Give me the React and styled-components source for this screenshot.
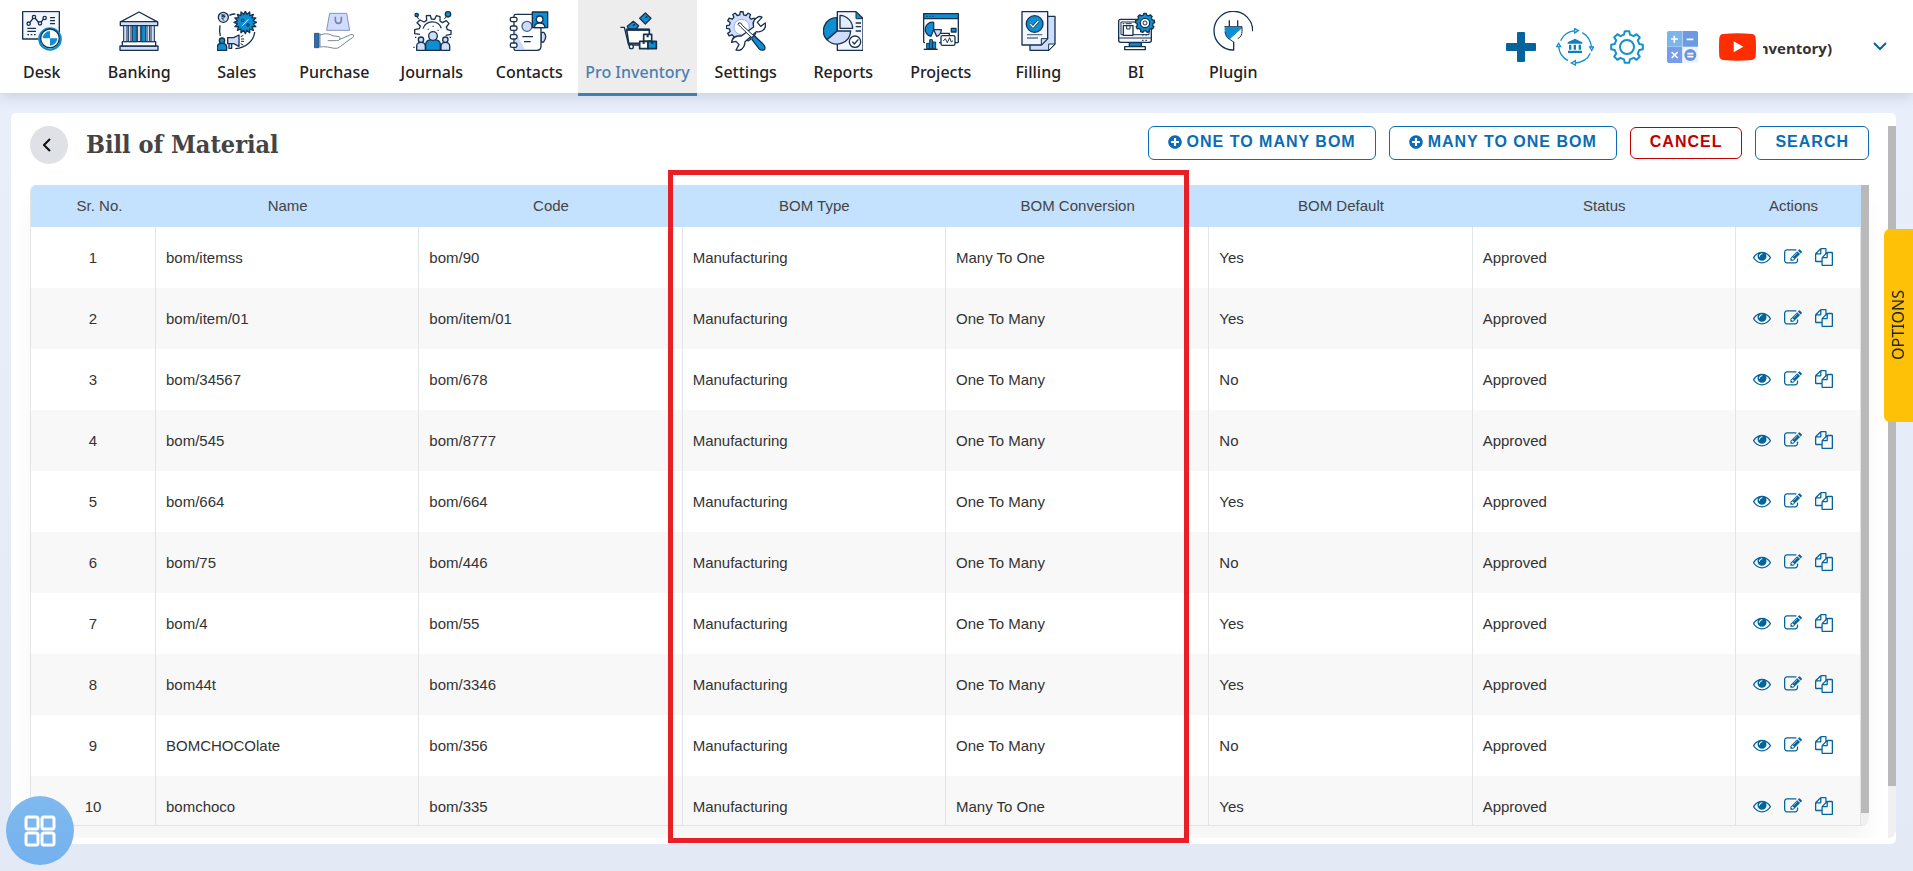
import React from "react";
import styled, { createGlobalStyle, css } from "styled-components";
import { FaPlusCircle } from "react-icons/fa";

const INK = "#17324f";
const BLUE = "#0f8fd3";
const PALE = "#cfdcfb";

const GlobalStyle = createGlobalStyle`
  * {
    box-sizing: border-box;
  }

  body {
    margin: 0;
    background: #e8eef9;
    color: #333;
    font-family: "Liberation Sans", Arial, sans-serif;
    font-size: 15px;
  }

  button {
    font-family: inherit;
    cursor: pointer;
  }
`;

const Page = styled.div`
  display: flex;
  flex-direction: column;
  height: 100vh;
  min-width: 1360px;
  overflow: hidden;
  background: linear-gradient(#e9effb, #e3e9f5);
`;

/* Top bar */
const TopBar = styled.header`
  display: flex;
  justify-content: space-between;
  flex: none;
  height: 93px;
  background: #fff;
  box-shadow: 0 2px 14px rgba(60, 75, 100, 0.22);
`;

const Nav = styled.nav`
  display: grid;
  grid-template-columns: repeat(6, 1fr) 119px repeat(6, 1fr);
  flex: 0 0 1289px;
  margin-left: -7px;
`;

const NavLink = styled.a`
  display: flex;
  flex-direction: column;
  align-items: center;
  gap: 9px;
  height: 93px;
  padding-top: 11px;
  color: #222;
  font-family: "Noto Sans", sans-serif;
  font-size: 16px;
  font-weight: 500;
  line-height: 24px;
  text-decoration: none;
  white-space: nowrap;

  ${({ $active }) =>
    $active &&
    css`
      height: 96px;
      background: #ededed;
      border-bottom: 3px solid #427fab;
      color: #4a80b0;
    `}
`;

const NavIcon = styled.svg`
  width: 40px;
  height: 40px;
  fill: none;
  stroke: ${INK};
  stroke-width: 4;
  stroke-linejoin: round;
`;

const Tools = styled.div`
  display: flex;
  align-items: center;
  padding-right: 26px;
`;

const ToolButton = styled.button`
  display: flex;
  margin-right: ${({ $gap }) => $gap}px;
  padding: 0;
  border: 0;
  background: none;
`;

const Company = styled.div`
  display: flex;
  justify-content: flex-end;
  width: 69px;
  margin-right: 41px;
  padding-top: 2px;
  overflow: hidden;
  font-family: "Open Sans", sans-serif;
  font-size: 15px;
  font-weight: 700;
  line-height: 22px;
  white-space: nowrap;
`;

/* Main card */
const Card = styled.main`
  position: relative;
  display: flex;
  flex: 1;
  min-height: 0;
  margin: 20px 17px 27px 11px;
  padding: 13px 0 6px;
  border-radius: 5px;
  background: #fff;
`;

const Scroller = styled.div`
  display: flex;
  flex-direction: column;
  flex: 1;
  min-width: 0;
  padding: 0 19px 12px;
  overflow: hidden;
`;

const Rail = styled.div`
  flex: none;
  width: 8px;
  padding-bottom: ${({ $rest }) => $rest}px;
  border-radius: 0 0 8px 0;
  background: #f0f0f0;
`;

const Thumb = styled.div`
  height: 100%;
  background: #b9b9b9;
`;

const TitleRow = styled.div`
  display: flex;
  align-items: flex-start;
  flex: none;
  height: 59px;
`;

const BackButton = styled.button`
  display: flex;
  align-items: center;
  justify-content: center;
  width: 38px;
  height: 38px;
  margin-right: 18px;
  padding: 0 4px 0 0;
  border: 0;
  border-radius: 50%;
  background: #dee2e6;
`;

const Title = styled.h1`
  margin: 0 auto 0 0;
  color: #444;
  font-family: "DejaVu Serif Condensed", "DejaVu Serif", serif;
  font-size: 25px;
  font-weight: 700;
  line-height: 38px;
`;

const ActionBar = styled.div`
  display: flex;
  align-items: center;
  gap: 13px;
`;

const OutlineButton = styled.button`
  display: flex;
  align-items: center;
  gap: 5px;
  height: ${({ $danger }) => ($danger ? 32 : 34)}px;
  padding: 0 19px 2px;
  border: 1px solid currentColor;
  border-radius: 6px;
  background: #fff;
  color: ${({ $danger }) => ($danger ? "#c00000" : "#0b6cb3")};
  font-size: 16px;
  font-weight: 700;
  letter-spacing: 1px;
  white-space: nowrap;

  svg {
    font-size: 14px;
  }
`;

const TablePanel = styled.div`
  display: flex;
  flex: 1;
  min-height: 0;
  border-bottom: 1px solid #e2e4e6;
  border-radius: 6px 0 8px 0;
  box-shadow: 0 16px 20px rgba(0, 0, 0, 0.04);
`;

const TableView = styled.div`
  flex: 1;
  min-width: 0;
  overflow: hidden;
  border-left: 1px solid #e2e5e8;
  border-radius: 6px 0 0 0;
  background: #fff;
`;

const Table = styled.table`
  width: 100%;
  border-collapse: separate;
  border-spacing: 0;
  table-layout: fixed;
`;

const HeadCell = styled.th`
  width: ${({ $width }) => $width || "auto"};
  height: 42px;
  padding: ${({ $pad }) => $pad || "0 0 2px"};
  background: #c4e1fe;
  color: #444;
  font-weight: 400;
  text-align: center;
`;

const Row = styled.tr`
  background: #fff;

  &:nth-child(even) {
    background: #f8f8f8;
  }
`;

const Cell = styled.td`
  height: 61px;
  padding: 0 10px;
  border-right: 1px solid #e2e5e8;
  text-align: ${({ $center }) => ($center ? "center" : "left")};
`;

const RowActions = styled.div`
  display: flex;
  align-items: center;
  gap: 13px;
  padding: 0 0 2px 7px;
`;

const IconButton = styled.button`
  display: flex;
  padding: 0;
  border: 0;
  background: none;
  color: #04649c;

  svg {
    width: 18px;
    height: 18px;
    fill: currentColor;
  }
`;

/* Frame over the BOM Type and BOM Conversion columns */
const ColumnHighlight = styled.div`
  position: absolute;
  top: 57px;
  bottom: 1px;
  left: calc((100% - 304px) / 3 + 130px);
  width: calc((100% - 304px) / 3 - 6px);
  border: 5px solid #e81f27;
  pointer-events: none;
`;

const OptionsTab = styled.button`
  position: fixed;
  top: 229px;
  right: 0;
  width: 29px;
  height: 193px;
  padding: 0;
  border: 0;
  border-radius: 0 6px 6px 0;
  background: #ffc107;
  color: #222;
  font-family: "Noto Sans", sans-serif;
  font-size: 16px;
  writing-mode: vertical-rl;
  transform: rotate(180deg);
`;

const AppsButton = styled.button`
  position: fixed;
  bottom: 6px;
  left: 6px;
  display: flex;
  align-items: center;
  justify-content: center;
  width: 68px;
  height: 69px;
  padding: 0;
  border: 0;
  border-radius: 50%;
  background: linear-gradient(#7fb9ee, #74b1ef);
`;

// Closed outline of a cog wheel
const gearPath = (cx, cy, outer, inner, teeth) => {
  const step = (Math.PI * 2) / teeth;
  const points = [];
  for (let i = 0; i < teeth; i += 1) {
    const a = i * step - Math.PI / 2;
    [
      [-0.3, inner],
      [-0.18, outer],
      [0.18, outer],
      [0.3, inner],
    ].forEach(([offset, r]) => {
      const x = cx + r * Math.cos(a + offset * step);
      const y = cy + r * Math.sin(a + offset * step);
      points.push(`${x.toFixed(1)} ${y.toFixed(1)}`);
    });
  }
  return `M${points.join("L")}Z`;
};

// Many-pointed badge used for the discount sticker
const starPath = (cx, cy, outer, inner, count) => {
  const points = [];
  for (let i = 0; i < count * 2; i += 1) {
    const a = (i * Math.PI) / count - Math.PI / 2;
    const r = i % 2 ? inner : outer;
    points.push(`${(cx + r * Math.cos(a)).toFixed(1)} ${(cy + r * Math.sin(a)).toFixed(1)}`);
  }
  return `M${points.join("L")}Z`;
};

const icons = {
  desk: (
    <>
      <path d="M2 2h110v82H2z" fill="#f3f6ff" />
      <path d="M5 5h104" stroke={PALE} strokeWidth="3" />
      <path d="M24 34l10-13M39 21l12 15M57 34l8-11" />
      <circle cx="20" cy="38" r="5" />
      <circle cx="36" cy="18" r="5" />
      <circle cx="54" cy="37" r="5" />
      <circle cx="68" cy="21" r="5" />
      <path d="M84 20h15M84 29h15M84 38h15M16 52h26M16 61h26" />
      <path d="M16 71h5M26 71h5M36 71h5" />
      <circle cx="84" cy="84" r="32" fill="#fff" stroke={BLUE} strokeWidth="7" />
      <circle cx="84" cy="82" r="28" fill="#fff" />
      <path d="M84 82V60a22 22 0 0 0-22 22zM84 82h22a22 22 0 0 1-22 22z" fill={BLUE} stroke="none" />
    </>
  ),
  banking: (
    <>
      <path d="M60 3L6 32h108z" fill="#fff" />
      <path d="M4 32h112v12H4zM3 105h114v13H3z" fill={PALE} />
      <path d="M10 92h100v13H10z" fill="#fff" />
      <path d="M14 44h10v48H14zM96 44h10v48H96zM28 44h8v48h-8zM84 44h8v48h-8z" fill={PALE} strokeWidth="3" />
      <path d="M40 44h12v48H40zM68 44h12v48H68z" fill={BLUE} strokeWidth="3" />
      <path d="M56 44v48M64 44v48" strokeWidth="3" />
    </>
  ),
  sales: (
    <>
      <circle cx="19" cy="19" r="15" fill={PALE} />
      <path d="M13 12h12M13 17h12M14 12c12 0 12 10 0 10l8 7" strokeWidth="3" />
      <path d="M37 13c6-3 12-4 18-4M9 43c-2 12-2 20 1 32M113 63c-2 24-24 48-58 50" />
      <path d={starPath(85, 34, 34, 24, 16)} fill={BLUE} />
      <path d="M94 25L76 44" stroke="#dff" strokeWidth="3" />
      <circle cx="77" cy="28" r="4" strokeWidth="3" />
      <circle cx="93" cy="42" r="4" strokeWidth="3" />
      <path d="M1 118v-10q0-11 14-11t14 11v10z" fill={BLUE} />
      <circle cx="15" cy="89" r="8" fill={BLUE} />
      <path d="M32 80h18l16-8v34l-16-8H32zM36 98v14h8V98" fill={PALE} />
      <path d="M71 77l8-4M72 84h9M72 91h9M71 98l8 4" strokeWidth="3" />
    </>
  ),
  purchase: (
    <>
      <path d="M47 7h51l9 51H38z" fill={PALE} stroke="#8795bb" strokeWidth="3" />
      <path d="M64 17v10q0 10 9 10t9-10V17" stroke="#7786a8" strokeWidth="5" />
      <path d="M1 67h14v43H1z" fill="#2d6da8" stroke="#2d5b8a" strokeWidth="3" />
      <path
        d="M18 72q22-8 35 1 6 3 19 3 8 1 6 8-2 5-11 5H41M78 85l32-14q10-2 10 4-3 6-11 9l-29 22q-9 8-19 6l-21-4q-12-2-22 0V67"
        fill="#fff"
        stroke="#7a8796"
        strokeWidth="3"
      />
    </>
  ),
  journals: (
    <>
      <path d="M24 70l-16-2V56l14-3 3-8-10-10 9-8 12 6 8-5-1-14 12-1 3 11 10 1 5-11 11 3 0 13 7 5 12-6 8 9-8 10 3 8 11 3v11l-16 3" />
      <path d="M33 53a29 29 0 0 1 55-1" />
      <circle cx="14" cy="12" r="5" fill={BLUE} />
      <circle cx="108" cy="10" r="8" fill={BLUE} />
      <path d="M14 16l7 9M103 17l-6 7" strokeWidth="3" />
      <path d="M14 118v-12q0-12 13-12t13 12v12zM87 118v-12q0-12 13-12t13 12v12z" fill={PALE} />
      <circle cx="27" cy="86" r="8" fill={PALE} />
      <circle cx="100" cy="86" r="8" fill={PALE} />
      <path d="M41 118v-18q0-14 22-14t22 14v18z" fill={BLUE} />
      <circle cx="63" cy="75" r="13" fill={PALE} />
      <path d="M9 79h4M113 79h4M4 109h4M47 55h3M62 46h3M77 58h3" />
    </>
  ),
  contacts: (
    <>
      <path d="M96 64h8q6 6 6 13t-6 16h-8z" fill={PALE} />
      <path d="M20 10h66q10 0 10 10v86q0 12-12 12H20q-5 0-5-5V15q0-5 5-5z" fill="#fff" />
      <path d="M18 55q17 40 30 60H18z" fill={PALE} stroke="none" />
      <circle cx="54" cy="46" r="15" fill={PALE} stroke="#3f6690" />
      <path d="M70 3h46v47H70z" fill={BLUE} />
      <circle cx="92" cy="25" r="10" fill="#fff" />
      <path d="M76 50q1-14 16-14t16 14z" fill="#fff" />
      <path d="M40 77h32M45 92h20" />
      <rect x="4" y="19" width="20" height="13" rx="5" fill="#fff" />
      <rect x="4" y="45" width="20" height="13" rx="5" fill="#fff" />
      <rect x="4" y="71" width="20" height="13" rx="5" fill="#fff" />
      <rect x="4" y="96" width="20" height="13" rx="5" fill="#fff" />
    </>
  ),
  inventory: (
    <>
      <path d="M82 6l17 16-17 17-17-17z" fill={BLUE} />
      <path d="M46 31l16 13-7 10H32l-4-8z" fill={BLUE} />
      <path d="M82 20l6-3M45 44l6-4" strokeWidth="5" />
      <path d="M26 56h68v41H32z" fill="#fff" strokeWidth="5" />
      <path d="M25 56h70" strokeWidth="7" />
      <path d="M7 49h12l13 53h37" />
      <circle cx="40" cy="107" r="6" fill="#fff" />
      <path d="M77 70h24v20H77zM65 91h25v22H65z" fill="#fff" strokeWidth="5" />
      <path d="M90 91h25v22H90z" fill={BLUE} strokeWidth="5" />
      <path d="M89 71v8M77 92v7M103 92v7" strokeWidth="6" />
    </>
  ),
  settings: (
    <>
      <path d={gearPath(47, 48, 46, 37, 12)} fill={PALE} />
      <circle cx="47" cy="48" r="23" fill="#fff" stroke="#9fb4d8" strokeWidth="3" />
      <path
        d="M83 48q-5-20 11-29 8-5 14 0L94 34l10 12 14-10q4 16-11 24-8 4-16 2L57 92q0 19-17 26l-10-1 9-16-9-10-13 3q2-16 18-19h11z"
        fill="#fff"
      />
      <path d="M36 40q0-6 8-4l6 8 35 32-6 6-34-33z" fill="#fff" strokeWidth="3" />
      <path d="M78 78l8-3 26 25q8 9 3 16-8 4-16-3L78 86z" fill={BLUE} />
    </>
  ),
  reports: (
    <>
      <path d="M43 2h56l21 20v96H43z" fill="#f2f5ff" />
      <path d="M99 2v21h20z" fill={BLUE} strokeWidth="3" />
      <path d="M42 20a40 40 0 0 0-31 66l31-25z" fill={BLUE} />
      <path d="M12 86a41 41 0 0 0 71-26H43z" fill={PALE} />
      <path d="M51 13a40 40 0 0 1 38 39H51z" fill="#e4ebff" />
      <path d="M98 36h16M98 47h16M98 60h16" />
      <circle cx="96" cy="92" r="17" fill="#fff" />
      <path d="M88 92l6 7 12-14" />
    </>
  ),
  projects: (
    <>
      <rect x="8" y="8" width="104" height="87" rx="3" fill="#fff" />
      <path d="M8 8h104v15H8z" fill={BLUE} />
      <path d="M16 16h4M25 16h4M34 16h4" strokeWidth="3" />
      <path d="M38 34a21 21 0 0 0-8 42l8-20z" fill={BLUE} />
      <path d="M38 56h23q-1 16-14 20z" fill={PALE} />
      <path d="M58 67h27v8" />
      <path d="M91 52h14v11H91z" fill={BLUE} />
      <path d="M12 86h42v30H12z" fill="#fff" stroke="none" />
      <rect x="60" y="74" width="42" height="29" rx="5" fill="#fff" />
      <path d="M67 90l6-7 6 12 7-15 5 13 5-4" strokeWidth="3" />
      <path d="M17 113V97h8v16zM26 113V86h8v27zM35 113v-20h9v20z" fill={BLUE} strokeWidth="3" />
      <path d="M8 115h42" />
    </>
  ),
  filling: (
    <>
      <path d="M36 16h75v83l-19 19H36z" fill={PALE} />
      <path d="M111 99H92v19z" fill="#fff" strokeWidth="3" />
      <path d="M12 2h77v81l-19 19H12z" fill="#f3f6ff" />
      <path d="M89 83H70v19z" fill={PALE} strokeWidth="3" />
      <circle cx="50" cy="39" r="25" fill={BLUE} />
      <path d="M37 40l8 8 16-18" strokeWidth="8" />
      <path d="M37 40l8 8 16-18" stroke="#fff" />
      <path d="M27 71h46M27 81h33" stroke="#60748e" />
    </>
  ),
  bi: (
    <>
      <rect x="8" y="25" width="98" height="69" rx="6" fill="#f3f6ff" />
      <path d="M15 33h84v38H15z" fill="#fff" strokeWidth="3" />
      <path d="M9 81h96" strokeWidth="3" />
      <path d="M40 95h36v11H40z" fill={BLUE} />
      <path d="M26 107h62v9H26z" fill="#fff" />
      <rect x="22" y="44" width="29" height="29" fill="#fff" />
      <path d="M32 45v9h10v-9" strokeWidth="3" />
      <path d="M20 38h5M29 38h18M78 72h5M88 72h5M78 88h5M88 88h5" strokeWidth="3" />
      <path d={gearPath(87, 36, 29, 24, 9)} fill={BLUE} />
      <circle cx="87" cy="36" r="14" fill="#fff" />
      <circle cx="87" cy="36" r="6" strokeWidth="3" />
    </>
  ),
  plugin: (
    <>
      <path d="M119 61A58 58 0 1 0 62 117V92" />
      <path d="M49 28v18M74 28v18" />
      <path d="M36 50h51L49 84Q36 75 36 50z" fill={BLUE} stroke={BLUE} strokeWidth="3" />
      <path d="M34 47h53v14q0 16-13 22" strokeWidth="3" />
      <path d="M36 62q2 18 14 23l12 8" strokeWidth="3" />
    </>
  ),
};

const navItems = [
  { label: "Desk", icon: "desk" },
  { label: "Banking", icon: "banking" },
  { label: "Sales", icon: "sales" },
  { label: "Purchase", icon: "purchase" },
  { label: "Journals", icon: "journals" },
  { label: "Contacts", icon: "contacts" },
  { label: "Pro Inventory", icon: "inventory", active: true },
  { label: "Settings", icon: "settings" },
  { label: "Reports", icon: "reports" },
  { label: "Projects", icon: "projects" },
  { label: "Filling", icon: "filling" },
  { label: "BI", icon: "bi" },
  { label: "Plugin", icon: "plugin" },
];

const rows = [
  ["bom/itemss", "bom/90", "Many To One", "Yes"],
  ["bom/item/01", "bom/item/01", "One To Many", "Yes"],
  ["bom/34567", "bom/678", "One To Many", "No"],
  ["bom/545", "bom/8777", "One To Many", "No"],
  ["bom/664", "bom/664", "One To Many", "Yes"],
  ["bom/75", "bom/446", "One To Many", "No"],
  ["bom/4", "bom/55", "One To Many", "Yes"],
  ["bom44t", "bom/3346", "One To Many", "Yes"],
  ["BOMCHOCOlate", "bom/356", "One To Many", "No"],
  ["bomchoco", "bom/335", "Many To One", "Yes"],
];

const rowActions = [
  {
    label: "View",
    path: "M1664 960q-152-236-381-353 61 104 61 225 0 185-131.5 316.5t-316.5 131.5-316.5-131.5-131.5-316.5q0-121 61-225-229 117-381 353 133 205 333.5 326.5t434.5 121.5 434.5-121.5 333.5-326.5zm-720-384q0-20-14-34t-34-14q-125 0-214.5 89.5t-89.5 214.5q0 20 14 34t34 14 34-14 14-34q0-86 61-147t147-61q20 0 34-14t14-34zm848 384q0 34-20 69-140 230-376.5 368.5t-499.5 138.5-499.5-139-376.5-368q-20-35-20-69t20-69q140-229 376.5-368t499.5-139 499.5 139 376.5 368q20 35 20 69z",
  },
  {
    label: "Edit",
    path: "M888 1184l116-116-152-152-116 116v56h96v96h56zm440-720q-16-16-33 1l-350 350q-17 17-1 33t33-1l350-350q17-17 1-33zm80 594v190q0 119-84.5 203.5t-203.5 84.5h-832q-119 0-203.5-84.5t-84.5-203.5v-832q0-119 84.5-203.5t203.5-84.5h832q63 0 117 25 15 7 18 23 3 17-9 29l-49 49q-14 14-32 8-23-6-45-6h-832q-66 0-113 47t-47 113v832q0 66 47 113t113 47h832q66 0 113-47t47-113v-126q0-13 9-22l64-64q15-15 35-7t20 29zm-96-738l288 288-672 672h-288v-288zm444 132l-92 92-288-288 92-92q28-28 68-28t68 28l152 152q28 28 28 68t-28 68z",
  },
  {
    label: "Copy",
    path: "M1696 384q40 0 68 28t28 68v1216q0 40-28 68t-68 28h-960q-40 0-68-28t-28-68v-288h-544q-40 0-68-28t-28-68v-672q0-40 20-88t48-76l408-408q28-28 76-48t88-20h416q40 0 68 28t28 68v328q68-40 128-40h416zm-544 213l-299 299h299v-299zm-640-384l-299 299h299v-299zm196 647l316-316v-416h-384v416q0 40-28 68t-68 28h-416v640h512v-256q0-40 20-88t48-76zm956 804v-1152h-384v416q0 40-28 68t-68 28h-416v640h896z",
  },
];

const HeaderTools = () => (
  <Tools>
    <ToolButton aria-label="Add" $gap={20}>
      <svg width="30" height="30" viewBox="0 0 30 30" fill="#07639c">
        <rect x="11" width="8" height="30" rx="1" />
        <rect y="11" width="30" height="8" rx="1" />
      </svg>
    </ToolButton>
    <ToolButton aria-label="Bank sync" $gap={16}>
      <svg width="38" height="38" viewBox="0 0 114 114" fill="none" stroke="#1690cf" strokeWidth="4">
        <path d="M14 38Q26 11 58 8M79 14q24 14 28 44M103 76q-12 26-44 29M36 98Q10 84 8 55" />
        <path d="M56 2l11 6-11 7zM101 57h12l-6 10zM58 98v13l-12-6zM2 56l6-10 6 10z" fill="#fff" />
        <path d="M57 32l22 11v4H35v-4zM39 50h7v15h-7zM53 50h7v15h-7zM68 50h7v15h-7zM36 68h42v7H36z" fill="#0f7fc2" stroke="none" />
      </svg>
    </ToolButton>
    <ToolButton aria-label="Preferences" $gap={23}>
      <svg width="34" height="34" viewBox="0 0 102 102" fill="none" stroke="#1690cf" strokeWidth="6" strokeLinejoin="round">
        <path d={gearPath(51, 51, 48, 38, 8)} />
        <circle cx="51" cy="51" r="21" />
      </svg>
    </ToolButton>
    <ToolButton aria-label="Calculator" $gap={21}>
      <svg width="31" height="32" viewBox="0 0 93 96">
        <path d="M4 0h42v47H0V4z" fill="#7ab6ec" />
        <path d="M47 0h42l4 4v43H47z" fill="#6c9be2" />
        <path d="M0 48h46v48H4l-4-4z" fill="#789ce9" />
        <path d="M47 48h46v44l-4 4H47z" fill="#eef3fd" />
        <circle cx="70" cy="72" r="18" fill="#6a92df" />
        <path d="M12 24h21M22 14v21M59 25h20M14 63l18 18M32 63L14 81M61 68h18M61 77h18" stroke="#fff" strokeWidth="5" />
      </svg>
    </ToolButton>
    <ToolButton aria-label="Video tutorials" $gap={7}>
      <svg width="37" height="28" viewBox="0 0 111 84">
        <path d="M12 3Q55-1 99 3q9 1 11 11 2 28 0 56-2 10-11 11-44 4-87 0-9-1-11-11-2-28 0-56 2-10 11-11z" fill="#ff2d00" />
        <path d="M44 25l29 16-29 17z" fill="#fff" />
      </svg>
    </ToolButton>
    <Company>(Pro Inventory)</Company>
    <ToolButton aria-label="Account menu" $gap={0}>
      <svg width="14" height="9" viewBox="0 0 14 9" fill="none" stroke="#0b6099" strokeWidth="2">
        <path d="M1 1l6 6 6-6" />
      </svg>
    </ToolButton>
  </Tools>
);

const BomTable = () => (
  <Table>
    <thead>
      <tr>
        <HeadCell $width="125px" $pad="0 0 2px 12px">
          Sr. No.
        </HeadCell>
        <HeadCell>Name</HeadCell>
        <HeadCell>Code</HeadCell>
        <HeadCell>BOM Type</HeadCell>
        <HeadCell>BOM Conversion</HeadCell>
        <HeadCell>BOM Default</HeadCell>
        <HeadCell>Status</HeadCell>
        <HeadCell $width="125px" $pad="0 10px 2px 0">
          Actions
        </HeadCell>
      </tr>
    </thead>
    <tbody>
      {rows.map(([name, code, conversion, isDefault], index) => (
        <Row key={name}>
          <Cell $center>{index + 1}</Cell>
          <Cell>{name}</Cell>
          <Cell>{code}</Cell>
          <Cell>Manufacturing</Cell>
          <Cell>{conversion}</Cell>
          <Cell>{isDefault}</Cell>
          <Cell>Approved</Cell>
          <Cell>
            <RowActions>
              {rowActions.map(({ label, path }) => (
                <IconButton key={label} aria-label={`${label} ${name}`}>
                  <svg viewBox="0 0 1792 1792">
                    <path d={path} />
                  </svg>
                </IconButton>
              ))}
            </RowActions>
          </Cell>
        </Row>
      ))}
    </tbody>
  </Table>
);

const App = () => {
  return (
    <Page>
      <GlobalStyle />
      <TopBar>
        <Nav>
          {navItems.map(({ label, icon, active }) => (
            <NavLink key={label} href="#" $active={active}>
              <NavIcon viewBox="0 0 120 120">{icons[icon]}</NavIcon>
              {label}
            </NavLink>
          ))}
        </Nav>
        <HeaderTools />
      </TopBar>

      <Card>
        <Scroller>
          <TitleRow>
            <BackButton aria-label="Back">
              <svg width="8" height="14" viewBox="0 0 8 14" fill="none" stroke="#111" strokeWidth="2">
                <path d="M7 1L1 7l6 6" />
              </svg>
            </BackButton>
            <Title>Bill of Material</Title>
            <ActionBar>
              <OutlineButton>
                <FaPlusCircle />
                ONE TO MANY BOM
              </OutlineButton>
              <OutlineButton>
                <FaPlusCircle />
                MANY TO ONE BOM
              </OutlineButton>
              <OutlineButton $danger>CANCEL</OutlineButton>
              <OutlineButton>SEARCH</OutlineButton>
            </ActionBar>
          </TitleRow>
          <TablePanel>
            <TableView>
              <BomTable />
            </TableView>
            <Rail $rest={12}>
              <Thumb />
            </Rail>
          </TablePanel>
        </Scroller>
        <Rail $rest={52}>
          <Thumb />
        </Rail>
        <ColumnHighlight />
      </Card>

      <OptionsTab>OPTIONS</OptionsTab>
      <AppsButton aria-label="Apps">
        <svg width="32" height="32" viewBox="0 0 32 32" fill="none" stroke="#fff" strokeWidth="3">
          <rect x="2" y="2" width="12" height="12" rx="2" />
          <rect x="18" y="2" width="12" height="12" rx="2" />
          <rect x="2" y="18" width="12" height="12" rx="2" />
          <rect x="18" y="18" width="12" height="12" rx="2" />
        </svg>
      </AppsButton>
    </Page>
  );
};

export default App;
